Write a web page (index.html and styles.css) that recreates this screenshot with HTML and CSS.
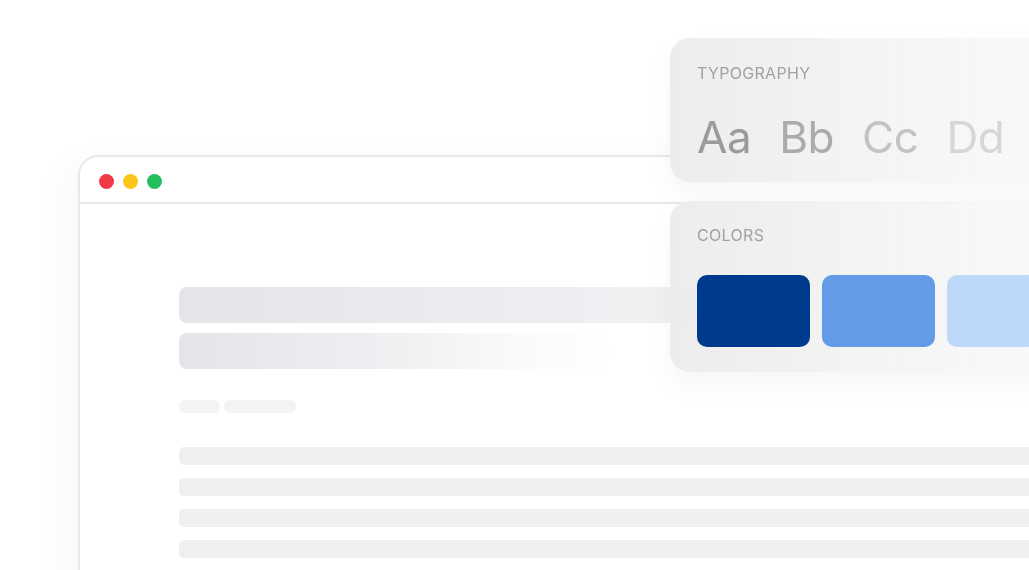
FILE: index.html
```html
<!DOCTYPE html>
<html lang="en">
<head>
    <meta charset="UTF-8">
    <meta name="viewport" content="width=device-width, initial-scale=1.0">
    <title>Design System</title>
    <link rel="stylesheet" href="styles.css">
</head>
<body>
    <div class="stage">
        <!-- Browser window mockup -->
        <div class="window">
            <div class="window-bar">
                <span class="dot red"></span>
                <span class="dot yellow"></span>
                <span class="dot green"></span>
            </div>
            <div class="window-body">
                <div class="title-bar wide"></div>
                <div class="title-bar short"></div>
                <div class="meta">
                    <span class="pill small"></span>
                    <span class="pill medium"></span>
                </div>
                <div class="lines">
                    <div class="line"></div>
                    <div class="line"></div>
                    <div class="line"></div>
                    <div class="line"></div>
                </div>
            </div>
        </div>

        <!-- Floating cards -->
        <div class="card card-type">
            <div class="card-label">TYPOGRAPHY</div>
            <div class="letters">
                <span class="l1">Aa</span>
                <span class="l2">Bb</span>
                <span class="l3">Cc</span>
                <span class="l4">Dd</span>
            </div>
        </div>

        <div class="card card-colors">
            <div class="card-label">COLORS</div>
            <div class="swatches">
                <span class="swatch navy"></span>
                <span class="swatch blue"></span>
                <span class="swatch sky"></span>
            </div>
        </div>
    </div>
</body>
</html>
```

FILE: styles.css
```css
* {
    margin: 0;
    padding: 0;
    box-sizing: border-box;
}

body {
    font-family: Inter, "Noto Sans", sans-serif;
    background-color: #fff;
    overflow: hidden;
    height: 570px;
}

.stage {
    position: relative;
    width: 1029px;
    height: 570px;
    overflow: hidden;
    padding: 155px 0 0 78px;
}

.window {
    width: 1100px;
    height: 600px;
    border: 2px solid #e7e8eb;
    border-radius: 20px 20px 0 0;
    background-color: #fff;
    box-shadow: -10px 10px 40px rgba(0, 0, 0, 0.035);
}

.window-bar {
    height: 47px;
    border-bottom: 2px solid #e7e8eb;
    display: flex;
    align-items: center;
    gap: 9px;
    padding: 4px 0 0 19px;
}

.dot {
    width: 15px;
    height: 15px;
    border-radius: 50%;
}

.red { background-color: #f03a46; }
.yellow { background-color: #fcc51a; }
.green { background-color: #22bf5c; }

.window-body {
    padding: 83px 0 0 99px;
}

.title-bar {
    height: 36px;
    border-radius: 8px;
}

.title-bar.wide {
    width: 640px;
    background: linear-gradient(90deg, #e3e5e8, #eef0f2 70%, #f1f2f4);
}

.title-bar.short {
    width: 430px;
    margin-top: 10px;
    background: linear-gradient(90deg, #e3e5e8, #eef0f2 50%, #f8f9fa 75%, rgba(255, 255, 255, 0));
}

.meta {
    display: flex;
    gap: 4px;
    margin-top: 31px;
}

.pill {
    height: 13px;
    border-radius: 7px;
    background-color: #f2f3f4;
}

.pill.small { width: 41px; }
.pill.medium { width: 72px; }

.lines {
    display: flex;
    flex-direction: column;
    gap: 13px;
    margin-top: 34px;
}

.line {
    height: 18px;
    border-radius: 5px;
    background-color: #eeeff1;
}

/* Floating cards */
.card {
    position: absolute;
    left: 670px;
    width: 420px;
    padding: 25px 27px 24px;
    border-radius: 20px;
    background: linear-gradient(90deg, rgba(234, 234, 235, 0.88), rgba(243, 243, 244, 0.88) 50%, rgba(250, 250, 250, 0.9));
    backdrop-filter: blur(6px);
    box-shadow: 0 12px 30px rgba(0, 0, 0, 0.04);
}

.card-type {
    top: 38px;
    height: 144px;
}

.card-colors {
    top: 201px;
    height: 171px;
    padding-top: 24px;
}

.card-label {
    font-size: 16px;
    line-height: 20px;
    color: #a1a1a3;
    letter-spacing: 0.02em;
}

.letters {
    display: flex;
    gap: 28px;
    margin-top: 32px;
    font-size: 44px;
    line-height: 44px;
    letter-spacing: -0.01em;
}

.l1 { color: #9b9b9c; }
.l2 { color: #ababac; }
.l3 { color: #c3c3c4; }
.l4 { color: #d6d6d7; }

.swatches {
    display: flex;
    gap: 12px;
    margin-top: 30px;
}

.swatch {
    width: 113px;
    height: 72px;
    border-radius: 10px;
    flex-shrink: 0;
}

.navy { background-color: #003a8c; }
.blue { background-color: #639be6; }
.sky { background-color: #bdd8f8; }
```
